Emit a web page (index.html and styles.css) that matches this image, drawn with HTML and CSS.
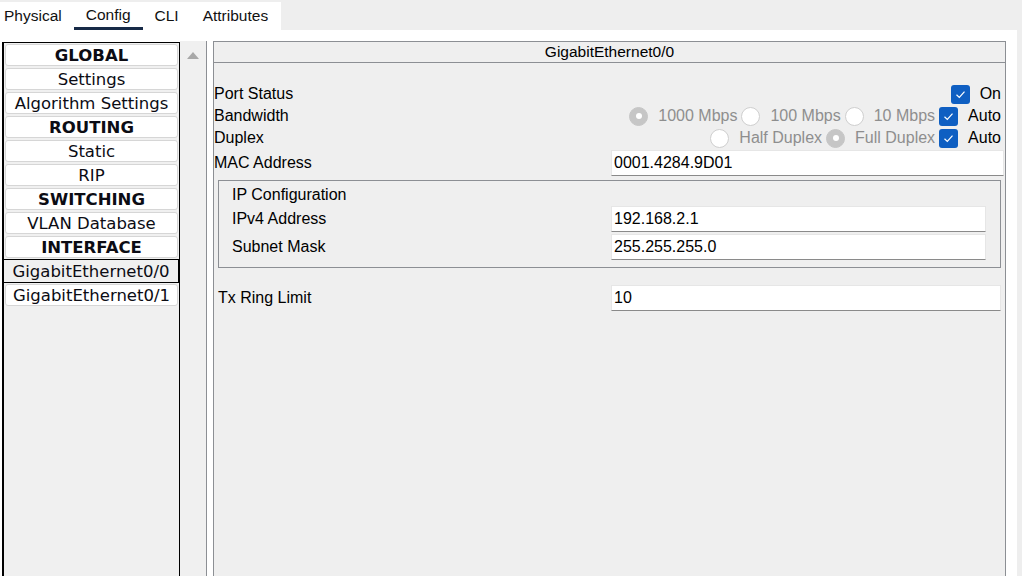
FILE: index.html
```html
<!DOCTYPE html>
<html>
<head>
<meta charset="utf-8">
<title>Router Config</title>
<link rel="stylesheet" href="styles.css">
</head>
<body>
<div class="main">
  <div class="topbar">
    <div class="tabs">
      <div class="tab first">Physical</div>
      <div class="tab active">Config</div>
      <div class="tab">CLI</div>
      <div class="tab">Attributes</div>
    </div>
  </div>
  <div class="workspace">
    <div class="navlist">
      <div class="item head">GLOBAL</div>
      <div class="item">Settings</div>
      <div class="item">Algorithm Settings</div>
      <div class="item head">ROUTING</div>
      <div class="item">Static</div>
      <div class="item">RIP</div>
      <div class="item head">SWITCHING</div>
      <div class="item">VLAN Database</div>
      <div class="item head">INTERFACE</div>
      <div class="item selected">GigabitEthernet0/0</div>
      <div class="item">GigabitEthernet0/1</div>
    </div>
    <div class="scrolltrack"><div class="arrow-up"></div></div>
    <div class="panel">
      <div class="panel-title">GigabitEthernet0/0</div>
      <div class="panel-body">
        <div class="row">
          <span class="label">Port Status</span>
          <div class="controls">
            <span class="check"><svg viewBox="0 0 19 19" width="19" height="19"><path d="M5.5 9.8 L8.3 12.4 L13.5 6.6" fill="none" stroke="#fff" stroke-width="1.2"/></svg></span>
            <span class="opt-text on">On</span>
          </div>
        </div>
        <div class="row">
          <span class="label">Bandwidth</span>
          <div class="controls">
            <span class="radio sel"></span><span class="opt-text dis">1000 Mbps</span>
            <span class="radio"></span><span class="opt-text dis">100 Mbps</span>
            <span class="radio"></span><span class="opt-text dis">10 Mbps</span>
            <span class="check"><svg viewBox="0 0 19 19" width="19" height="19"><path d="M5.5 9.8 L8.3 12.4 L13.5 6.6" fill="none" stroke="#fff" stroke-width="1.2"/></svg></span>
            <span class="opt-text last">Auto</span>
          </div>
        </div>
        <div class="row">
          <span class="label">Duplex</span>
          <div class="controls">
            <span class="radio"></span><span class="opt-text dis">Half Duplex</span>
            <span class="radio sel"></span><span class="opt-text dis">Full Duplex</span>
            <span class="check"><svg viewBox="0 0 19 19" width="19" height="19"><path d="M5.5 9.8 L8.3 12.4 L13.5 6.6" fill="none" stroke="#fff" stroke-width="1.2"/></svg></span>
            <span class="opt-text last">Auto</span>
          </div>
        </div>
        <div class="field mac">
          <span class="label">MAC Address</span>
          <div class="input">0001.4284.9D01</div>
        </div>
        <div class="group">
          <div class="group-title">IP Configuration</div>
          <div class="field gfield">
            <span class="label">IPv4 Address</span>
            <div class="input">192.168.2.1</div>
          </div>
          <div class="field gfield">
            <span class="label">Subnet Mask</span>
            <div class="input">255.255.255.0</div>
          </div>
        </div>
        <div class="field tx">
          <span class="label">Tx Ring Limit</span>
          <div class="input">10</div>
        </div>
      </div>
    </div>
  </div>
</div>
<div class="edge"></div>
</body>
</html>
```
FILE: styles.css
```css
html, body {
  margin: 0;
  padding: 0;
}
body {
  width: 1022px;
  height: 576px;
  overflow: hidden;
  display: flex;
  background: #ffffff;
  font-family: "Liberation Sans", Arial, sans-serif;
  color: #000;
}
.main {
  flex: 1;
  display: flex;
  flex-direction: column;
  min-width: 0;
}
.edge {
  width: 5px;
  background: #eeeeee;
}
.topbar {
  height: 30px;
  box-sizing: border-box;
  padding-top: 2px;
  background: #eeeeee;
  display: flex;
}
.tabs {
  width: 281px;
  height: 28px;
  background: #ffffff;
  display: flex;
}
.tab {
  padding: 0 12px;
  font-size: 15.5px;
  line-height: 28px;
  height: 28px;
  box-sizing: border-box;
  color: #111;
}
.tab.first {
  padding-left: 4px;
}
.tab.active {
  border-bottom: 3px solid #172a47;
  line-height: 26px;
}
.workspace {
  flex: 1;
  display: flex;
  min-height: 0;
}
.navlist {
  margin: 12px 0 0 2px;
  width: 178px;
  box-sizing: border-box;
  border: 1px solid #000;
  border-left-width: 2px;
  border-bottom: none;
  background: #f0f0f0;
  padding-top: 1px;
  font-family: "DejaVu Sans", Verdana, sans-serif;
  font-size: 16.5px;
  color: #0c0c14;
}
.item {
  height: 22px;
  margin: 0 1px 2px 1px;
  box-sizing: border-box;
  background: #ffffff;
  border: 1px solid #d6d6d6;
  border-radius: 3px;
  text-align: center;
  line-height: 21px;
  white-space: nowrap;
}
.item.head {
  font-weight: bold;
}
.item.selected {
  height: 24px;
  margin: -1px 0 1px -1px;
  background: #f0f0f0;
  border: 1px solid #000;
  border-radius: 0;
  line-height: 23px;
}
.scrolltrack {
  margin-top: 11px;
  width: 27px;
  box-sizing: border-box;
  background: #f0f0f0;
  border-right: 1px solid #8c8f94;
  display: flex;
  justify-content: center;
  padding-top: 11px;
}
.arrow-up {
  width: 0;
  height: 0;
  border-left: 6px solid transparent;
  border-right: 6px solid transparent;
  border-bottom: 7px solid #a8a8a8;
}
.panel {
  margin: 11px 11px 0 6px;
  flex: 1;
  background: #efefef;
  border: 1px solid #8c8f94;
  border-bottom: none;
  display: flex;
  flex-direction: column;
}
.panel-title {
  height: 20px;
  line-height: 20px;
  text-align: center;
  font-size: 15.5px;
  border-bottom: 1px solid #8c8f94;
}
.panel-body {
  padding-top: 20px;
  font-size: 16px;
}
.row {
  height: 22px;
  display: flex;
  align-items: center;
  justify-content: space-between;
  padding-right: 4px;
}
.label {
  white-space: nowrap;
}
.controls {
  display: flex;
  align-items: center;
}
.opt-text {
  margin-left: 10px;
  margin-right: 4px;
  white-space: nowrap;
}
.opt-text.dis {
  color: #8e8e8e;
}
.opt-text.last, .opt-text.on {
  margin-right: 0;
}
.radio {
  width: 19px;
  height: 19px;
  box-sizing: border-box;
  border-radius: 50%;
  background: #ffffff;
  border: 1px solid #cfcfcf;
  position: relative;
}
.radio.sel {
  background: #c6c6c6;
  border-color: #c6c6c6;
}
.radio.sel::after {
  content: "";
  position: absolute;
  left: 5.5px;
  top: 5.5px;
  width: 6px;
  height: 6px;
  border-radius: 50%;
  background: #ffffff;
}
.check {
  width: 19px;
  height: 19px;
  border-radius: 3px;
  background: #0f5fc2;
  display: flex;
}
.field {
  display: grid;
  align-items: center;
}
.input {
  height: 26px;
  box-sizing: border-box;
  background: #ffffff;
  border: 1px solid #e6e6e6;
  border-bottom-color: #8a8a8a;
  padding-left: 2px;
  line-height: 24px;
  white-space: nowrap;
}
.mac {
  margin-top: 1px;
  grid-template-columns: 397px 1fr;
  padding-right: 1px;
}
.group {
  margin: 4px 4px 0 4px;
  border: 1px solid #8c8f94;
  padding: 0 14px 7px 13px;
}
.group-title {
  height: 25px;
  line-height: 20px;
  padding-top: 4px;
  box-sizing: border-box;
}
.gfield {
  grid-template-columns: 379px 1fr;
  margin-bottom: 2px;
}
.gfield:last-child {
  margin-bottom: 0;
}
.tx {
  margin-top: 17px;
  padding: 0 4px;
  grid-template-columns: 393px 1fr;
}
```
